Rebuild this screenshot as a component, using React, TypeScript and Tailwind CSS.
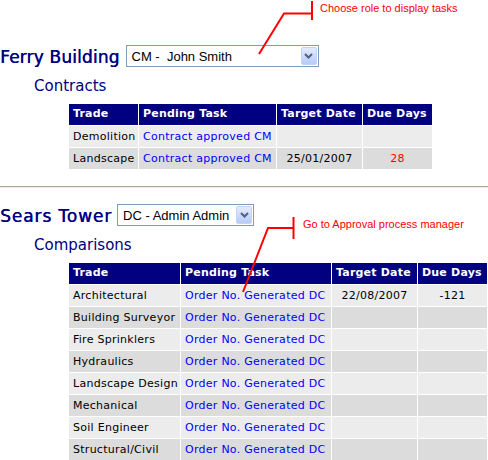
import React from "react";

type Row = { trade: string; task: string; date?: string; due?: string; dueRed?: boolean };

function Select({ label, width }: { label: string; width: string }) {
  return (
    <div className={`relative h-[22px] ${width} border border-[#7f9db9] bg-white flex items-center`}>
      <span className="pl-[5px] whitespace-pre text-[13px] leading-none text-black font-['Liberation_Sans',Arial,sans-serif]">
        {label}
      </span>
      <div className="absolute right-px top-px bottom-px w-[16px] rounded-[2px] border border-[#c4d3f5] bg-gradient-to-b from-[#e3ebfd] to-[#b7cbf6] flex items-center justify-center">
        <svg width="9" height="6" viewBox="0 0 9 6">
          <path d="M1 1 L4.5 4.5 L8 1" fill="none" stroke="#4d6185" strokeWidth="2" />
        </svg>
      </div>
    </div>
  );
}

function Table({ cols, rows }: { cols: string; rows: Row[] }) {
  const head = "h-[21px] flex items-center px-[4px] bg-[#000080] text-white font-bold tracking-[0.2px]";
  return (
    <div className={`grid ${cols} gap-px ml-[69px] text-[11px] tracking-[0.27px] font-['DejaVu_Sans',Verdana,sans-serif]`}>
      <div className={head}>Trade</div>
      <div className={head}>Pending Task</div>
      <div className={head}>Target Date</div>
      <div className={head}>Due Days</div>
      {rows.map((r, i) => {
        const bg = i % 2 === 0 ? "bg-[#ececec]" : "bg-[#dcdcdc]";
        const cell = `h-[21px] flex items-center pt-px ${bg}`;
        return (
          <React.Fragment key={i}>
            <div className={`${cell} px-[4px] text-black whitespace-nowrap`}>{r.trade}</div>
            <div className={`${cell} px-[4px] text-[#0000ff] whitespace-nowrap`}>{r.task}</div>
            <div className={`${cell} justify-center text-black`}>{r.date ?? ""}</div>
            <div className={`${cell} justify-center ${r.dueRed ? "text-[#ff0000]" : "text-black"}`}>{r.due ?? ""}</div>
          </React.Fragment>
        );
      })}
    </div>
  );
}

export default function App() {
  const rows1: Row[] = [
    { trade: "Demolition", task: "Contract approved CM" },
    { trade: "Landscape", task: "Contract approved CM", date: "25/01/2007", due: "28", dueRed: true },
  ];
  const trades2 = [
    "Architectural",
    "Building Surveyor",
    "Fire Sprinklers",
    "Hydraulics",
    "Landscape Design",
    "Mechanical",
    "Soil Engineer",
    "Structural/Civil",
  ];
  const rows2: Row[] = trades2.map((t, i) =>
    i === 0
      ? { trade: t, task: "Order No. Generated DC", date: "22/08/2007", due: "-121" }
      : { trade: t, task: "Order No. Generated DC" }
  );

  const title = "mt-[2px] text-[17px] leading-[20px] text-[#000080] font-['DejaVu_Sans',Tahoma,sans-serif] [text-shadow:0.4px_0_0_#000080]";
  const sub = "ml-[34px] text-[15px] leading-[18px] text-[#000080] font-['DejaVu_Sans',Tahoma,sans-serif]";

  return (
    <div className="relative w-[488px] h-[460px] overflow-hidden bg-white">
      <div className="pt-[45px] flex flex-col">
        <div className="flex items-start gap-[6px] h-[22px]">
          <span className={`${title} tracking-[0.15px]`}>Ferry Building</span>
          <Select label="CM -  John Smith" width="w-[193px]" />
        </div>
        <div className={`mt-[10px] ${sub}`}>Contracts</div>
        <div className="mt-[9px]">
          <Table cols="grid-cols-[69px_137px_85px_69px] w-[363px]" rows={rows1} />
        </div>
        <div className="mt-[17px] h-[2px] border-t border-[#aca899] border-b border-b-[#eeede5]" />
        <div className="mt-[16px] flex items-start gap-[5px] h-[22px]">
          <span className={`${title} tracking-[0.9px]`}>Sears Tower</span>
          <Select label="DC - Admin Admin" width="w-[137px]" />
        </div>
        <div className={`mt-[10px] ${sub}`}>Comparisons</div>
        <div className="mt-[9px]">
          <Table cols="grid-cols-[111px_150px_85px_69px] w-[418px]" rows={rows2} />
        </div>
      </div>

      <svg className="absolute left-0 top-0 pointer-events-none" width="488" height="460">
        <g stroke="#ff0000" strokeWidth="2" fill="none">
          <line x1="312" y1="1" x2="312" y2="20" />
          <polyline points="312,13.5 284,13.5 259,54" />
          <line x1="293.5" y1="217" x2="293.5" y2="239" />
          <polyline points="293.5,228 268,228 243,292" />
        </g>
      </svg>
      <span className="absolute left-[320px] top-[2px] text-[11px] leading-[13px] text-[#ff0000] whitespace-nowrap font-['Liberation_Sans',Arial,sans-serif]">
        Choose role to display tasks
      </span>
      <span className="absolute left-[303px] top-[218px] text-[11px] leading-[13px] text-[#ff0000] whitespace-nowrap font-['Liberation_Sans',Arial,sans-serif]">
        Go to Approval process manager
      </span>
    </div>
  );
}
